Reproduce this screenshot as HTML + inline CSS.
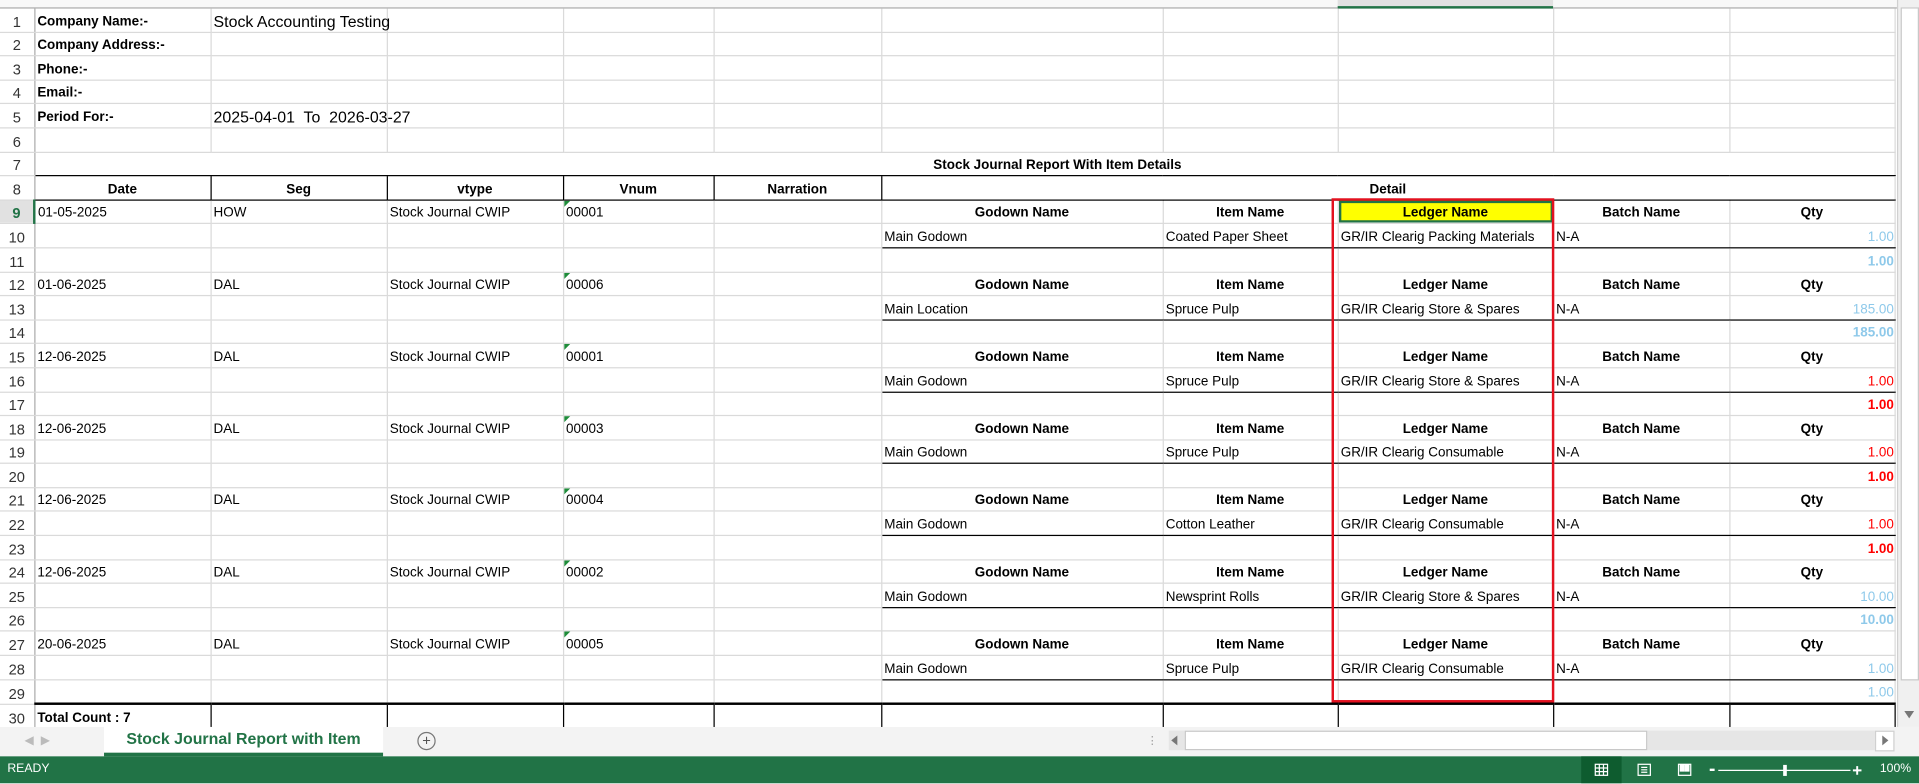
<!DOCTYPE html>
<html><head><meta charset="utf-8"><style>
html,body{margin:0;padding:0;width:1919px;height:784px;overflow:hidden;background:#fff}
.s{position:absolute;left:0;top:0;width:1568px;height:640px;transform:scale(1.22385);transform-origin:0 0;font-family:"Liberation Sans",sans-serif;font-size:11px;color:#000}
.ch{position:absolute;left:0;top:0;width:1550px;height:6px;background:#f8f8f8;border-bottom:1px solid #ababab}
table{position:absolute;left:0;top:7px;border-collapse:collapse;table-layout:fixed;width:1548px}
td{height:17.6px;padding:0 2px 1px 2px;border-right:1px solid #dadada;border-bottom:1px solid #dadada;white-space:nowrap;overflow:hidden;line-height:14px;vertical-align:bottom}
td.rn{text-align:center;font-size:12px;color:#333;border-right:1px solid #ababab;padding:0 0 1px 0}
td.sel{background:#e1e1e1;color:#217346;font-weight:bold;border-right:2px solid #217346}
.b{font-weight:bold}.c{text-align:center}
.h{font-weight:bold;text-align:center}
.bb{border-bottom:1px solid #000}
.bk{border-bottom:2px solid #000}
.vr{border-right:1px solid #000}
.q{text-align:right;padding-right:0;color:#8ec9ea}
.qr{text-align:right;padding-right:0;color:#f00}
.v{position:relative}
.v:before{content:"";position:absolute;left:0;top:0;border-top:5px solid #1e8c3a;border-right:5px solid transparent}
.big{font-size:13px;overflow:visible}
.led{background:#ff0;box-shadow:inset 0 0 0 2px #217346}
.box{position:absolute;left:1088px;top:162px;width:178px;height:408px;border:2px solid #e3111f}
.vs{position:absolute;left:1550px;top:0;width:18px;height:594px;background:#f0f0f0;border-left:1px solid #d0d0d0}
.tb{position:absolute;left:0;top:594px;width:1568px;height:24px;background:#f3f3f3}
.tab{position:absolute;left:85px;top:0;width:228px;height:21px;background:#fff;border-bottom:3px solid #217346;color:#217346;font-weight:bold;font-size:13px;text-align:center;line-height:20px}
.sb{position:absolute;left:0;top:618px;width:1568px;height:22px;background:#217346;color:#fff;font-size:10px;line-height:22px}
</style></head><body><div class="s">
<div class="ch"><div style="position:absolute;left:1093px;width:176px;height:5px;background:#e1e1e1;border-bottom:2px solid #217346"></div></div>
<table>
<colgroup><col style="width:28px"><col style="width:144px"><col style="width:144px"><col style="width:144px"><col style="width:123px"><col style="width:137px"><col style="width:230px"><col style="width:143px"><col style="width:176px"><col style="width:144px"><col style="width:135px"></colgroup>
<tr><td class="rn">1</td><td class="b">Company Name:-</td><td class="big">Stock Accounting Testing</td><td></td><td></td><td></td><td></td><td></td><td></td><td></td><td></td></tr>
<tr><td class="rn">2</td><td class="b">Company Address:-</td><td></td><td></td><td></td><td></td><td></td><td></td><td></td><td></td><td></td></tr>
<tr><td class="rn">3</td><td class="b">Phone:-</td><td></td><td></td><td></td><td></td><td></td><td></td><td></td><td></td><td></td></tr>
<tr><td class="rn">4</td><td class="b">Email:-</td><td></td><td></td><td></td><td></td><td></td><td></td><td></td><td></td><td></td></tr>
<tr><td class="rn">5</td><td class="b">Period For:-</td><td class="big">2025-04-01&nbsp; To&nbsp; 2026-03-27</td><td></td><td></td><td></td><td></td><td></td><td></td><td></td><td></td></tr>
<tr><td class="rn">6</td><td></td><td></td><td></td><td></td><td></td><td></td><td></td><td></td><td></td><td></td></tr>
<tr><td class="rn">7</td><td colspan="10" class="h bb" style="padding-left:154px">Stock Journal Report With Item Details</td></tr>
<tr><td class="rn">8</td><td class="h bb vr">Date</td><td class="h bb vr">Seg</td><td class="h bb vr">vtype</td><td class="h bb vr">Vnum</td><td class="h bb vr">Narration</td><td colspan="5" class="h bb">Detail</td></tr>

<tr><td class="rn sel">9</td><td>01-05-2025</td><td>HOW</td><td>Stock Journal CWIP</td><td class="v">00001</td><td></td><td class="h">Godown Name</td><td class="h">Item Name</td><td class="h led">Ledger Name</td><td class="h">Batch Name</td><td class="h">Qty</td></tr>
<tr><td class="rn">10</td><td></td><td></td><td></td><td></td><td></td><td class="bb">Main Godown</td><td class="bb">Coated Paper Sheet</td><td class="bb">GR/IR Clearig Packing Materials</td><td class="bb">N-A</td><td class="bb q">1.00</td></tr>
<tr><td class="rn">11</td><td></td><td></td><td></td><td></td><td></td><td></td><td></td><td></td><td></td><td class="q b">1.00</td></tr>

<tr><td class="rn">12</td><td>01-06-2025</td><td>DAL</td><td>Stock Journal CWIP</td><td class="v">00006</td><td></td><td class="h">Godown Name</td><td class="h">Item Name</td><td class="h">Ledger Name</td><td class="h">Batch Name</td><td class="h">Qty</td></tr>
<tr><td class="rn">13</td><td></td><td></td><td></td><td></td><td></td><td class="bb">Main Location</td><td class="bb">Spruce Pulp</td><td class="bb">GR/IR Clearig Store &amp; Spares</td><td class="bb">N-A</td><td class="bb q">185.00</td></tr>
<tr><td class="rn">14</td><td></td><td></td><td></td><td></td><td></td><td></td><td></td><td></td><td></td><td class="q b">185.00</td></tr>

<tr><td class="rn">15</td><td>12-06-2025</td><td>DAL</td><td>Stock Journal CWIP</td><td class="v">00001</td><td></td><td class="h">Godown Name</td><td class="h">Item Name</td><td class="h">Ledger Name</td><td class="h">Batch Name</td><td class="h">Qty</td></tr>
<tr><td class="rn">16</td><td></td><td></td><td></td><td></td><td></td><td class="bb">Main Godown</td><td class="bb">Spruce Pulp</td><td class="bb">GR/IR Clearig Store &amp; Spares</td><td class="bb">N-A</td><td class="bb qr">1.00</td></tr>
<tr><td class="rn">17</td><td></td><td></td><td></td><td></td><td></td><td></td><td></td><td></td><td></td><td class="qr b">1.00</td></tr>

<tr><td class="rn">18</td><td>12-06-2025</td><td>DAL</td><td>Stock Journal CWIP</td><td class="v">00003</td><td></td><td class="h">Godown Name</td><td class="h">Item Name</td><td class="h">Ledger Name</td><td class="h">Batch Name</td><td class="h">Qty</td></tr>
<tr><td class="rn">19</td><td></td><td></td><td></td><td></td><td></td><td class="bb">Main Godown</td><td class="bb">Spruce Pulp</td><td class="bb">GR/IR Clearig Consumable</td><td class="bb">N-A</td><td class="bb qr">1.00</td></tr>
<tr><td class="rn">20</td><td></td><td></td><td></td><td></td><td></td><td></td><td></td><td></td><td></td><td class="qr b">1.00</td></tr>

<tr><td class="rn">21</td><td>12-06-2025</td><td>DAL</td><td>Stock Journal CWIP</td><td class="v">00004</td><td></td><td class="h">Godown Name</td><td class="h">Item Name</td><td class="h">Ledger Name</td><td class="h">Batch Name</td><td class="h">Qty</td></tr>
<tr><td class="rn">22</td><td></td><td></td><td></td><td></td><td></td><td class="bb">Main Godown</td><td class="bb">Cotton Leather</td><td class="bb">GR/IR Clearig Consumable</td><td class="bb">N-A</td><td class="bb qr">1.00</td></tr>
<tr><td class="rn">23</td><td></td><td></td><td></td><td></td><td></td><td></td><td></td><td></td><td></td><td class="qr b">1.00</td></tr>

<tr><td class="rn">24</td><td>12-06-2025</td><td>DAL</td><td>Stock Journal CWIP</td><td class="v">00002</td><td></td><td class="h">Godown Name</td><td class="h">Item Name</td><td class="h">Ledger Name</td><td class="h">Batch Name</td><td class="h">Qty</td></tr>
<tr><td class="rn">25</td><td></td><td></td><td></td><td></td><td></td><td class="bb">Main Godown</td><td class="bb">Newsprint Rolls</td><td class="bb">GR/IR Clearig Store &amp; Spares</td><td class="bb">N-A</td><td class="bb q">10.00</td></tr>
<tr><td class="rn">26</td><td></td><td></td><td></td><td></td><td></td><td></td><td></td><td></td><td></td><td class="q b">10.00</td></tr>

<tr><td class="rn">27</td><td>20-06-2025</td><td>DAL</td><td>Stock Journal CWIP</td><td class="v">00005</td><td></td><td class="h">Godown Name</td><td class="h">Item Name</td><td class="h">Ledger Name</td><td class="h">Batch Name</td><td class="h">Qty</td></tr>
<tr><td class="rn">28</td><td></td><td></td><td></td><td></td><td></td><td class="bb">Main Godown</td><td class="bb">Spruce Pulp</td><td class="bb">GR/IR Clearig Consumable</td><td class="bb">N-A</td><td class="bb q">1.00</td></tr>
<tr><td class="rn">29</td><td class="bk"></td><td class="bk"></td><td class="bk"></td><td class="bk"></td><td class="bk"></td><td class="bk"></td><td class="bk"></td><td class="bk"></td><td class="bk"></td><td class="bk q">1.00</td></tr>
<tr><td class="rn">30</td><td class="b vr">Total Count : 7</td><td class="vr"></td><td class="vr"></td><td class="vr"></td><td class="vr"></td><td class="vr"></td><td class="vr"></td><td class="vr"></td><td class="vr"></td><td class="vr"></td></tr>
</table>
<div class="box"></div>
<div class="vs">
<div style="position:absolute;left:2px;top:6px;width:13px;height:548px;background:#fff;border:1px solid #c8c8c8"></div>
<div style="position:absolute;left:5px;top:581px;border-top:6px solid #777;border-left:4px solid transparent;border-right:4px solid transparent"></div>
</div>
<div class="tb">
<div style="position:absolute;left:20px;top:6px;color:#bbb;font-size:10px">&#9664;&nbsp;&nbsp;&#9654;</div>
<div class="tab">Stock Journal Report with Item</div>
<div style="position:absolute;left:341px;top:4px;width:13px;height:13px;border:1px solid #777;border-radius:50%;text-align:center;line-height:13px;color:#555;font-size:12px">+</div>
<div style="position:absolute;left:937px;top:6px;color:#999;font-size:9px">&#8942;</div>
<div style="position:absolute;left:955px;top:3px;width:593px;height:16px;background:#e6e6e6">
<div style="position:absolute;left:2px;top:4px;border-right:5px solid #777;border-top:4px solid transparent;border-bottom:4px solid transparent"></div>
<div style="position:absolute;left:13px;top:0;width:376px;height:14px;background:#fff;border:1px solid #c8c8c8"></div>
<div style="position:absolute;right:0;top:0;width:14px;height:15px;background:#fff;border:1px solid #d0d0d0"><div style="position:absolute;left:5px;top:3px;border-left:5px solid #777;border-top:4px solid transparent;border-bottom:4px solid transparent"></div></div>
</div>
</div>
<div class="sb">
<span style="position:absolute;left:6px">READY</span>
<div style="position:absolute;left:1292px;top:0;width:33px;height:22px;background:#0e5c2f"></div>
<svg style="position:absolute;left:1300px;top:4px" width="240" height="14" viewBox="0 0 240 14" fill="none" stroke="#fff" stroke-width="1">
<rect x="3.5" y="2.5" width="10" height="9"/><path d="M3.5 5.5h10M3.5 8.5h10M6.8 2.5v9M10.2 2.5v9"/>
<rect x="38.5" y="2.5" width="10" height="9"/><path d="M41 5h5M41 7h5M41 9h5"/>
<rect x="71.5" y="2.5" width="10" height="9"/><rect x="73" y="3" width="3" height="5" fill="#fff"/><rect x="77" y="3" width="3" height="5" fill="#fff"/>
<path d="M97 7h4" stroke-width="2"/><path d="M104 7.5h108"/><rect x="157" y="3" width="3" height="9" fill="#fff" stroke="none"/><path d="M214 7.5h7M217.5 4v7" stroke-width="1.6"/>
</svg>
<span style="position:absolute;left:1536px">100%</span>
</div>
</div></body></html>
